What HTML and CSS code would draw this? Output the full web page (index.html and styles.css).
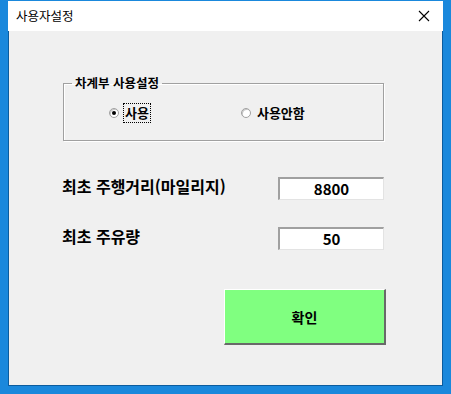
FILE: index.html
```html
<!DOCTYPE html>
<html lang="ko">
<head>
    <meta charset="UTF-8">
    <title>사용자설정</title>
    <link rel="stylesheet" href="styles.css">
</head>
<body>
    <div class="window">
        <div class="titlebar">
            <span class="title">사용자설정</span>
            <span class="close">
                <svg width="12" height="12" viewBox="0 0 12 12">
                    <path d="M1 1 L11 11 M11 1 L1 11" stroke="#000" stroke-width="1.1" fill="none"/>
                </svg>
            </span>
        </div>

        <div class="content">
            <fieldset class="group">
                <legend>차계부 사용설정</legend>
                <div class="radio-row">
                    <label class="radio checked">
                        <span class="dot"></span>
                        <span class="radio-text focus">사용</span>
                    </label>
                    <label class="radio">
                        <span class="dot"></span>
                        <span class="radio-text">사용안함</span>
                    </label>
                </div>
            </fieldset>

            <div class="field-row first">
                <span class="field-label">최초 주행거리(마일리지)</span>
                <div class="textbox">8800</div>
            </div>

            <div class="field-row">
                <span class="field-label">최초 주유량</span>
                <div class="textbox">50</div>
            </div>

            <div class="actions">
                <button class="ok-btn">확인</button>
            </div>
        </div>
    </div>
</body>
</html>
```

FILE: styles.css
```css
* {
    margin: 0;
    padding: 0;
    box-sizing: border-box;
}

body {
    width: 451px;
    height: 394px;
    font-family: "Noto Sans CJK KR", "Noto Sans", sans-serif;
    color: #000;
    background: #fff;
}

.window {
    width: 451px;
    height: 394px;
    border: 8px solid #1a88dc;
    border-top: 1px solid #1a88dc;
    background: #f0f0f0;
    display: flex;
    flex-direction: column;
    box-shadow: inset 0 -1px 0 #0b5c9e, inset 1px 0 0 #0b5c9e, inset -1px 0 0 #0b5c9e;
}

.titlebar {
    height: 30px;
    background: #fff;
    display: flex;
    align-items: center;
    justify-content: space-between;
    padding: 0 13px 0 8px;
}

.title {
    font-size: 12.5px;
    line-height: 16px;
}

.close {
    display: flex;
    width: 12px;
    height: 12px;
}

.content {
    flex: 1;
    padding: 43px 0 0 0;
}

.group {
    margin: 0 59px 0 55px;
    height: 67px;
    border: 1px solid #a0a0a0;
    box-shadow: 1px 1px 0 #fff, inset 1px 1px 0 #fff;
    padding: 0 0 0 10px;
}

.group legend {
    font-size: 12.5px;
    font-weight: bold;
    line-height: 18px;
    padding: 0 3px;
    margin-left: -2px;
}

.radio-row {
    display: flex;
    padding: 11px 0 0 35px;
    gap: 90px;
}

.radio {
    display: flex;
    align-items: center;
    gap: 4px;
    font-size: 13px;
}

.dot {
    width: 10px;
    height: 10px;
    border-radius: 50%;
    border: 1px solid #a0a0a0;
    background: #fff;
    box-shadow: inset 1px 1px 0 #c8c8c8;
    position: relative;
}

.radio.checked .dot::after {
    content: "";
    position: absolute;
    left: 2px;
    top: 2px;
    width: 4px;
    height: 4px;
    border-radius: 50%;
    background: #000;
}

.radio-text {
    font-weight: bold;
    line-height: 18px;
    padding: 0 1px;
    border: 1px dotted transparent;
}

.radio-text.focus {
    border-color: #000;
}

.field-row {
    display: flex;
    align-items: center;
    justify-content: space-between;
    margin: 0 59px 0 54px;
    height: 23px;
}

.field-row.first {
    margin-top: 36px;
    margin-bottom: 27px;
}

.field-label {
    font-size: 16px;
    font-weight: bold;
    line-height: 20px;
    margin-top: -6px;
}

.field-row + .field-row .field-label {
    margin-top: -5px;
}

.textbox {
    width: 106px;
    height: 23px;
    background: #fff;
    border-top: 2px solid #a0a0a0;
    border-left: 2px solid #a0a0a0;
    border-right: 1px solid #e3e3e3;
    border-bottom: 1px solid #e3e3e3;
    font-size: 15px;
    font-weight: bold;
    line-height: 20px;
    text-align: center;
}

.actions {
    display: flex;
    justify-content: flex-end;
    margin: 39px 57px 0 0;
}

.ok-btn {
    width: 162px;
    height: 56px;
    background: #80ff80;
    border: none;
    border-top: 1px solid #fff;
    border-left: 1px solid #fff;
    border-right: 2px solid #696969;
    border-bottom: 2px solid #696969;
    font-family: inherit;
    font-size: 14px;
    font-weight: bold;
    color: #000;
}
```
